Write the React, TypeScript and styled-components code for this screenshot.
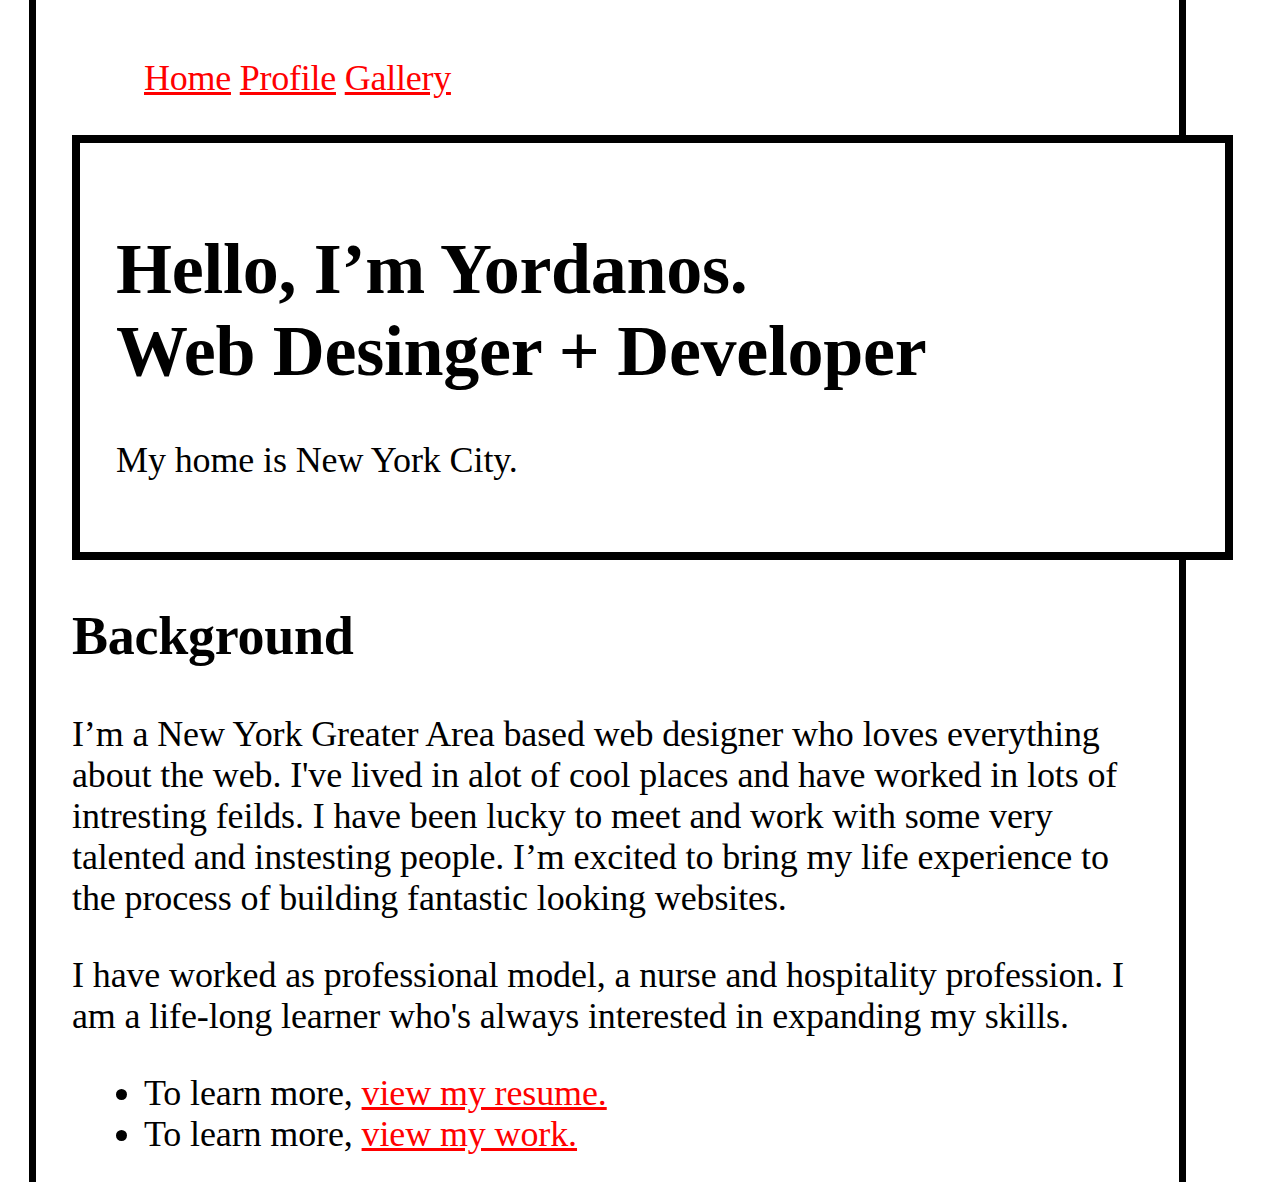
import React from "react";
import styled, { createGlobalStyle } from "styled-components";

const GlobalStyle = createGlobalStyle`
  html, body {
    margin: 0;
    padding: 0;
    background: #ffffff;
  }
  body {
    font-family: "Liberation Serif", "Times New Roman", Times, serif;
    font-size: 36px;
    line-height: 41px;
    letter-spacing: -0.12px;
    color: #000000;
  }
`;

const Page = styled.div`
  box-sizing: border-box;
  margin-left: 29px;
  width: 1157px;
  min-height: 1300px;
  border-left: 7px solid #000;
  border-right: 7px solid #000;
  padding: 22px 36px 1px;
`;

const NavList = styled.ul`
  list-style: none;
  margin: 36px 0;
  padding: 0 0 0 72px;
  letter-spacing: -0.25px;
`;

const NavItem = styled.li`
  display: inline;
`;

const Link = styled.a`
  color: #ff0000;
  text-decoration: underline;
`;

const Hero = styled.header`
  box-sizing: content-box;
  width: calc(100% + 2px);
  border: 8px solid #000;
  padding: 36px 36px 35px;
  background: #ffffff;
`;

const HeroTitle = styled.h1`
  font-size: 72px;
  line-height: 82px;
  letter-spacing: -0.3px;
  font-weight: bold;
  margin: 49px 0 48px;
`;

const Paragraph = styled.p`
  margin: 36px 0;
`;

const SectionTitle = styled.h2`
  font-size: 54px;
  line-height: 62px;
  letter-spacing: -0.25px;
  font-weight: bold;
  margin: 45px 0 47px;
`;

const BulletList = styled.ul`
  list-style: disc;
  margin: 36px 0;
  padding-left: 72px;
`;

export default function App() {
  return (
    <>
      <GlobalStyle />
      <Page>
        <nav>
          <NavList>
            <NavItem>
              <Link href="#">Home</Link>
            </NavItem>{" "}
            <NavItem>
              <Link href="#">Profile</Link>
            </NavItem>{" "}
            <NavItem>
              <Link href="#">Gallery</Link>
            </NavItem>
          </NavList>
        </nav>
        <Hero>
          <HeroTitle>
            Hello, I’m Yordanos.
            <br />
            Web Desinger + Developer
          </HeroTitle>
          <Paragraph>My home is New York City.</Paragraph>
        </Hero>
        <main>
          <SectionTitle>Background</SectionTitle>
          <Paragraph>
            I’m a New York Greater Area based web designer who loves everything
            about the web. I've lived in alot of cool places and have worked in
            lots of intresting feilds. I have been lucky to meet and work with
            some very talented and instesting people. I’m excited to bring my
            life experience to the process of building fantastic looking
            websites.
          </Paragraph>
          <Paragraph>
            I have worked as professional model, a nurse and hospitality
            profession. I am a life-long learner who's always interested in
            expanding my skills.
          </Paragraph>
          <BulletList>
            <li>
              To learn more, <Link href="#">view my resume.</Link>
            </li>
            <li>
              To learn more, <Link href="#">view my work.</Link>
            </li>
          </BulletList>
        </main>
      </Page>
    </>
  );
}
